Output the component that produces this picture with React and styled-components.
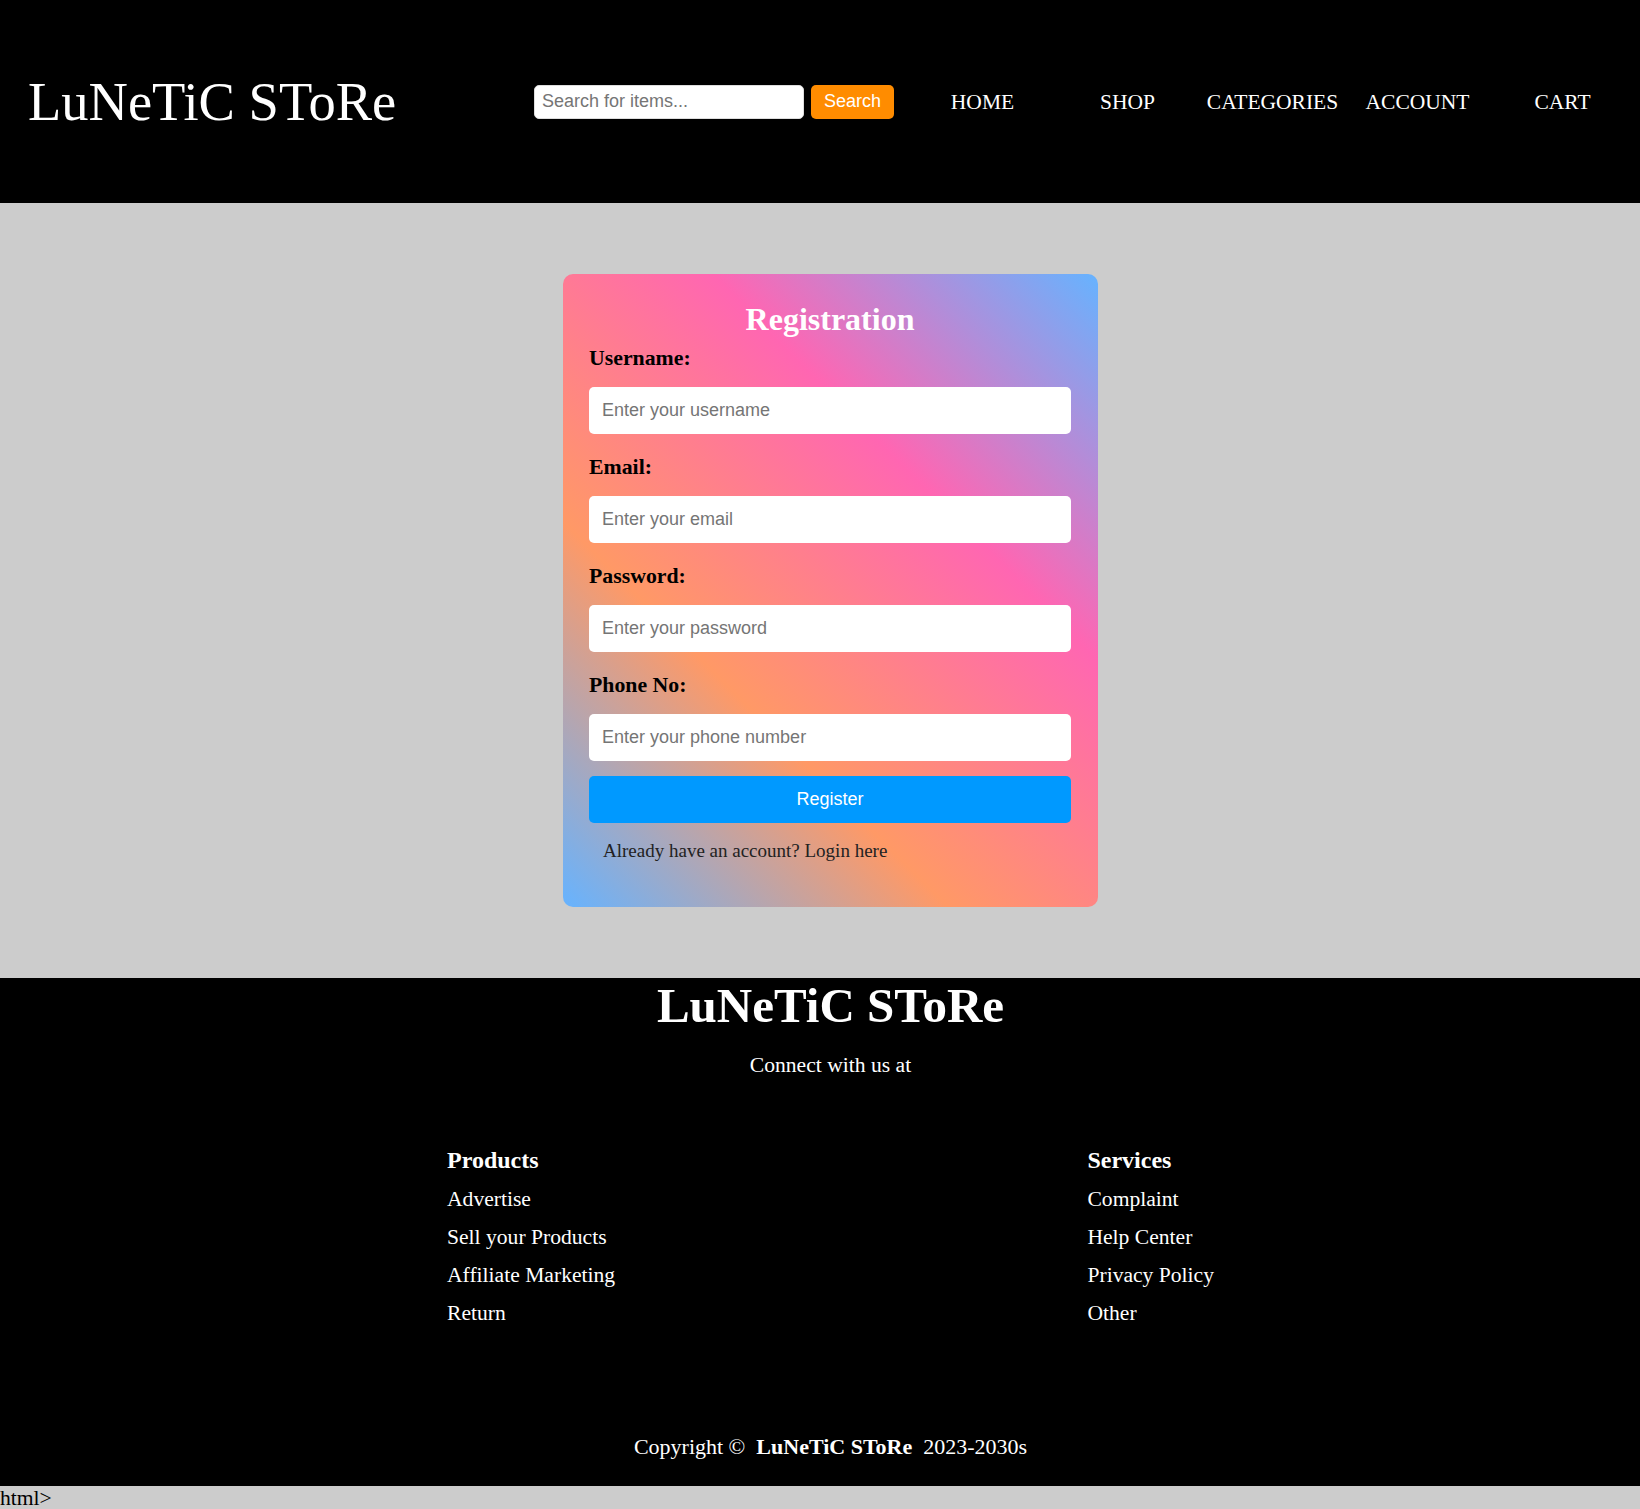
import React from "react";
import styled, { createGlobalStyle } from "styled-components";

const SERIF = `"Liberation Serif", "Times New Roman", serif`;
const SANS = `"Liberation Sans", Arial, sans-serif`;

const navItems = ["HOME", "SHOP", "CATEGORIES", "ACCOUNT", "CART"];

const fields = [
  { label: "Username:", type: "text", placeholder: "Enter your username" },
  { label: "Email:", type: "email", placeholder: "Enter your email" },
  { label: "Password:", type: "password", placeholder: "Enter your password" },
  { label: "Phone No:", type: "tel", placeholder: "Enter your phone number" },
];

const footerColumns = [
  {
    title: "Products",
    links: ["Advertise", "Sell your Products", "Affiliate Marketing", "Return"],
  },
  {
    title: "Services",
    links: ["Complaint", "Help Center", "Privacy Policy", "Other"],
  },
];

const App = () => {
  return (
    <>
      <GlobalStyle />
      <Header>
        <Brand>LuNeTiC SToRe</Brand>
        <SearchForm onSubmit={(e) => e.preventDefault()}>
          <SearchInput type="text" placeholder="Search for items..." />
          <SearchButton type="submit">Search</SearchButton>
        </SearchForm>
        <Nav>
          {navItems.map((item) => (
            <NavLink key={item} href="#">
              {item}
            </NavLink>
          ))}
        </Nav>
      </Header>

      <Main>
        <Card onSubmit={(e) => e.preventDefault()}>
          <Title>Registration</Title>
          {fields.map((field) => (
            <Field key={field.label}>
              <Label>{field.label}</Label>
              <Input type={field.type} placeholder={field.placeholder} />
            </Field>
          ))}
          <RegisterButton type="submit">Register</RegisterButton>
          <LoginNote>Already have an account? Login here</LoginNote>
        </Card>
      </Main>

      <Footer>
        <FooterBrand>LuNeTiC SToRe</FooterBrand>
        <Connect>Connect with us at</Connect>
        <Columns>
          {footerColumns.map((col) => (
            <Column key={col.title}>
              <ColumnTitle>{col.title}</ColumnTitle>
              {col.links.map((link) => (
                <FooterLink key={link} href="#">
                  {link}
                </FooterLink>
              ))}
            </Column>
          ))}
        </Columns>
        <Copyright>
          Copyright ©&nbsp; <strong>LuNeTiC SToRe</strong> &nbsp;2023-2030s
        </Copyright>
      </Footer>
      <Leftover>html&gt;</Leftover>
    </>
  );
};

const GlobalStyle = createGlobalStyle`
  * {
    box-sizing: border-box;
  }
  body {
    margin: 0;
    background: #cccccc;
    font-family: ${SERIF};
    font-size: 21.6px;
  }
`;

const Header = styled.header`
  display: flex;
  align-items: center;
  height: 203px;
  padding: 0 5px 0 28px;
  background: #000;
`;
const Brand = styled.div`
  width: 506px;
  flex-shrink: 0;
  color: #fff;
  font-size: 54.5px;
  line-height: 61px;
`;
const SearchForm = styled.form`
  display: flex;
  gap: 7px;
  margin: 0;
`;
const SearchInput = styled.input`
  width: 270px;
  height: 34px;
  padding: 0 7px;
  border: 1px solid #ddd;
  border-radius: 5px;
  background: #fff;
  font-family: ${SANS};
  font-size: 18px;
  outline: none;
  &::placeholder {
    color: #757575;
  }
`;
const SearchButton = styled.button`
  width: 83px;
  height: 34px;
  padding: 0;
  border: none;
  border-radius: 5px;
  background: #ff8c00;
  color: #fff;
  font-family: ${SANS};
  font-size: 18px;
  cursor: pointer;
`;
const Nav = styled.nav`
  display: flex;
  margin-left: 16px;
`;
const NavLink = styled.a`
  width: 145px;
  text-align: center;
  color: #fff;
  font-size: 21.5px;
  line-height: 24px;
  text-decoration: none;
`;

const Main = styled.main`
  display: flex;
  justify-content: center;
  padding: 71px 0 71px 21px;
`;
const Card = styled.form`
  display: flex;
  flex-direction: column;
  width: 535px;
  margin: 0;
  padding: 27px 27px 45px 26px;
  border-radius: 10px;
  background: linear-gradient(45deg, #66b3ff 0%, #ff9966 33%, #ff66b2 67%, #66b3ff 100%);
`;
const Title = styled.h2`
  margin: 0 0 9px;
  color: #fff;
  font-size: 32px;
  line-height: 36px;
  text-align: center;
`;
const Field = styled.div`
  display: flex;
  flex-direction: column;
  gap: 17px;
  margin-bottom: 21px;
  &:last-of-type {
    margin-bottom: 15px;
  }
`;
const Label = styled.label`
  color: #000;
  font-size: 21.8px;
  font-weight: bold;
  line-height: 24px;
`;
const Input = styled.input`
  width: 100%;
  height: 47px;
  padding: 0 13px;
  border: none;
  border-radius: 5px;
  background: #fff;
  font-family: ${SANS};
  font-size: 18px;
  outline: none;
  &::placeholder {
    color: #757575;
  }
`;
const RegisterButton = styled.button`
  width: 100%;
  height: 47px;
  border: none;
  border-radius: 5px;
  background: #0099ff;
  color: #fff;
  font-family: ${SANS};
  font-size: 18px;
  cursor: pointer;
`;
const LoginNote = styled.p`
  margin: 17px 0 0;
  padding-left: 14px;
  color: #222;
  font-size: 19px;
  line-height: 22px;
`;

const Footer = styled.footer`
  display: flex;
  flex-direction: column;
  align-items: center;
  padding: 0 0 27px 21px;
  background: #000;
  color: #fff;
`;
const FooterBrand = styled.h1`
  margin: 0;
  font-size: 49px;
  line-height: 55px;
`;
const Connect = styled.p`
  margin: 20px 0 0;
  font-size: 21.6px;
  line-height: 25px;
`;
const Columns = styled.div`
  display: flex;
  justify-content: space-between;
  width: 767px;
  margin-top: 68px;
`;
const Column = styled.div`
  display: flex;
  flex-direction: column;
  gap: 13px;
`;
const ColumnTitle = styled.h3`
  margin: 0;
  font-size: 24px;
  line-height: 28px;
`;
const FooterLink = styled.a`
  color: #fff;
  font-size: 21.6px;
  line-height: 25px;
  text-decoration: none;
`;
const Copyright = styled.p`
  margin: 108px 0 0;
  font-size: 22px;
  line-height: 25px;
`;
const Leftover = styled.div`
  line-height: 25px;
  color: #000;
`;

export default App;
